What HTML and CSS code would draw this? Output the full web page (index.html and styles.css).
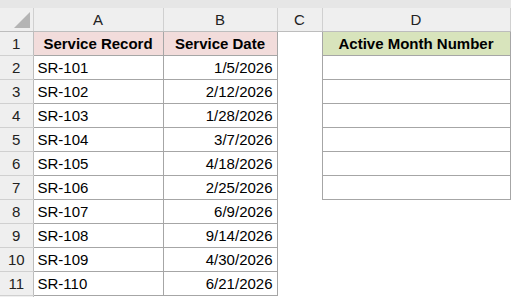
FILE: index.html
```html
<!DOCTYPE html>
<html>
<head>
<meta charset="utf-8">
<link rel="stylesheet" href="styles.css">
</head>
<body>
<div class="topstrip"></div>
<table class="sheet">
  <colgroup>
    <col class="c-rh"><col class="c-a"><col class="c-b"><col class="c-c"><col class="c-d">
  </colgroup>
  <thead>
    <tr class="colhead">
      <th class="corner"><span class="tri"></span></th>
      <th>A</th><th>B</th><th>C</th><th>D</th>
    </tr>
  </thead>
  <tbody>
    <tr><th class="rh">1</th><td class="bd hdr pink">Service Record</td><td class="bd hdr pink">Service Date</td><td></td><td class="bd hdr green">Active Month Number</td></tr>
    <tr><th class="rh">2</th><td class="bd">SR-101</td><td class="bd num">1/5/2026</td><td></td><td class="bd"></td></tr>
    <tr><th class="rh">3</th><td class="bd">SR-102</td><td class="bd num">2/12/2026</td><td></td><td class="bd"></td></tr>
    <tr><th class="rh">4</th><td class="bd">SR-103</td><td class="bd num">1/28/2026</td><td></td><td class="bd"></td></tr>
    <tr><th class="rh">5</th><td class="bd">SR-104</td><td class="bd num">3/7/2026</td><td></td><td class="bd"></td></tr>
    <tr><th class="rh">6</th><td class="bd">SR-105</td><td class="bd num">4/18/2026</td><td></td><td class="bd"></td></tr>
    <tr><th class="rh">7</th><td class="bd">SR-106</td><td class="bd num">2/25/2026</td><td></td><td class="bd"></td></tr>
    <tr><th class="rh">8</th><td class="bd">SR-107</td><td class="bd num">6/9/2026</td><td></td><td></td></tr>
    <tr><th class="rh">9</th><td class="bd">SR-108</td><td class="bd num">9/14/2026</td><td></td><td></td></tr>
    <tr><th class="rh">10</th><td class="bd">SR-109</td><td class="bd num">4/30/2026</td><td></td><td></td></tr>
    <tr><th class="rh">11</th><td class="bd">SR-110</td><td class="bd num">6/21/2026</td><td></td><td></td></tr>
    <tr class="last"><th class="rh"></th><td></td><td></td><td></td><td></td></tr>
  </tbody>
</table>
</body>
</html>
```
FILE: styles.css
```css
html, body {
  margin: 0;
  padding: 0;
  background: #ffffff;
  overflow: hidden;
}
body {
  font-family: "Liberation Sans", Arial, sans-serif;
  font-size: 15px;
  color: #000;
}
.topstrip {
  height: 8px;
  background: #e6e6e6;
}
.sheet {
  border-collapse: collapse;
  table-layout: fixed;
  width: 510px;
}
.c-rh { width: 33px; }
.c-a { width: 130px; }
.c-b { width: 114px; }
.c-c { width: 45px; }
.c-d { width: 188px; }
.sheet th, .sheet td {
  padding: 0 4px;
  height: 24px;
  white-space: nowrap;
  overflow: hidden;
  box-sizing: border-box;
}
.colhead th {
  height: 23px;
  background: #efefef;
  font-weight: normal;
  color: #222;
  text-align: center;
  border-right: 1px solid #d0d0d0;
  border-bottom: 1px solid #bdbdbd;
  font-size: 15px;
}
.corner {
  position: relative;
}
.tri {
  position: absolute;
  right: 3px;
  bottom: 3px;
  width: 0;
  height: 0;
  border-left: 16px solid transparent;
  border-bottom: 16px solid #b4b4b4;
}
.rh {
  background: #efefef;
  font-weight: normal;
  color: #222;
  text-align: center;
  border-right: 1px solid #bdbdbd;
  border-bottom: 1px solid #d0d0d0;
}
td.bd {
  border: 1px solid #a6a6a6;
}
td.hdr {
  font-weight: bold;
  text-align: center;
}
td.pink { background: #f2dcdb; }
td.green { background: #d8e4bc; }
td.num { text-align: right; }
.last th, .last td { height: 6px; }
```
